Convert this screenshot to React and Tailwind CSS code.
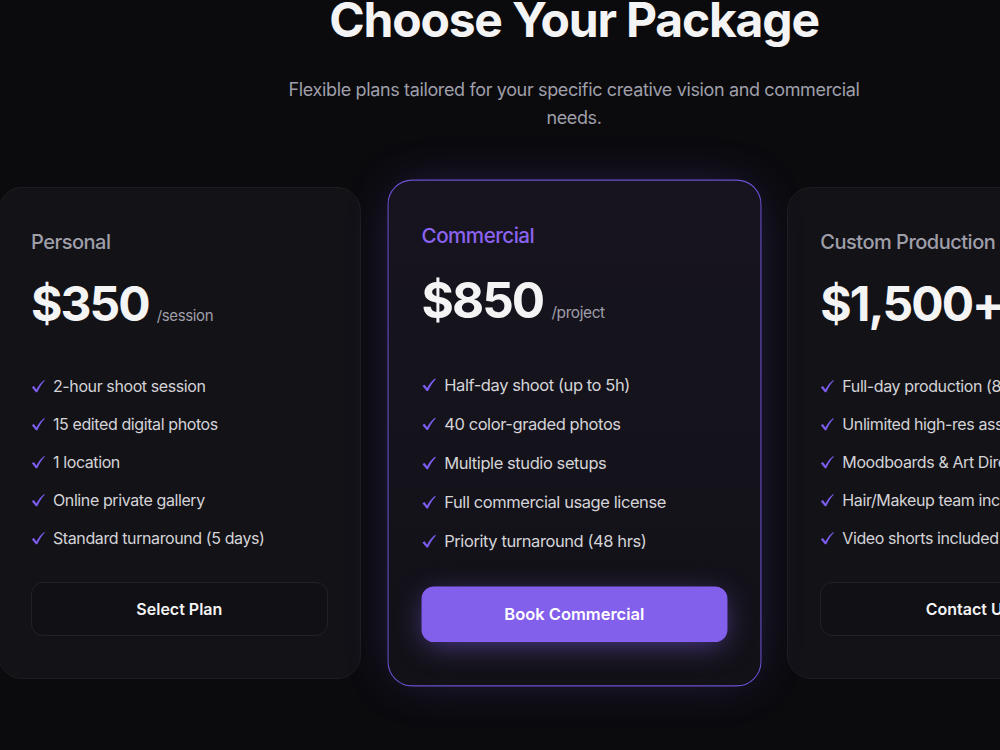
import React from "react";

const plans = [
  {
    name: "Personal",
    price: "$350",
    unit: "/session",
    features: [
      "2-hour shoot session",
      "15 edited digital photos",
      "1 location",
      "Online private gallery",
      "Standard turnaround (5 days)",
    ],
    cta: "Select Plan",
  },
  {
    name: "Commercial",
    price: "$850",
    unit: "/project",
    features: [
      "Half-day shoot (up to 5h)",
      "40 color-graded photos",
      "Multiple studio setups",
      "Full commercial usage license",
      "Priority turnaround (48 hrs)",
    ],
    cta: "Book Commercial",
    featured: true,
  },
  {
    name: "Custom Production",
    price: "$1,500+",
    unit: "/project",
    features: [
      "Full-day production (8+ hrs)",
      "Unlimited high-res assets",
      "Moodboards & Art Direction",
      "Hair/Makeup team included",
      "Video shorts included",
    ],
    cta: "Contact Us",
  },
];

const Check = () => (
  <svg viewBox="0 0 14 14" className="mr-2 h-[14px] w-[14px] shrink-0 fill-[#7d5cf0]">
    <path d="M0.8 8.2 L2.9 7.1 L5.4 10.4 C7.6 6.4 10.2 3.2 13.2 0.9 L13.8 1.7 C10.9 4.6 8.4 8.6 6.3 13.2 L4.9 13.2 Z" />
  </svg>
);

const PlanCard = ({ plan }) => {
  const featured = plan.featured;
  return (
    <div
      className={
        featured
          ? "relative z-10 scale-[1.03] rounded-3xl border border-[#6f52d6] bg-gradient-to-b from-[#17141f] to-[#121117] px-8 pt-10 pb-[42px] shadow-[0_0_50px_-14px_rgba(124,92,246,0.35)]"
          : "rounded-3xl border border-[#1d1c22] bg-[#131217] px-8 pt-10 pb-[42px]"
      }
    >
      <h3
        className={
          featured
            ? "text-xl font-medium leading-7 tracking-tight text-[#8b63f0]"
            : "text-xl font-medium leading-7 tracking-tight text-zinc-400"
        }
      >
        {plan.name}
      </h3>

      <div className="mt-6 flex items-baseline whitespace-nowrap">
        <span className="text-5xl font-bold leading-none tracking-[-0.04em] text-zinc-100">
          {plan.price}
        </span>
        <span className="ml-2 text-[15px] tracking-tight text-zinc-400">{plan.unit}</span>
      </div>

      <ul className="mt-[46px] flex flex-col gap-3.5">
        {plan.features.map((f) => (
          <li key={f} className="flex items-center whitespace-nowrap text-base leading-6 tracking-tight text-zinc-300">
            <Check />
            {f}
          </li>
        ))}
      </ul>

      {featured ? (
        <button className="mt-8 w-full rounded-xl border border-[#8660f2] bg-[#8360ec] py-3.5 text-base font-semibold leading-6 text-white shadow-[0_6px_28px_-4px_rgba(131,96,236,0.55)]">
          {plan.cta}
        </button>
      ) : (
        <button className="mt-8 w-full whitespace-nowrap rounded-xl border border-[#222128] bg-[#111014] py-3.5 text-base font-semibold leading-6 text-zinc-100">
          {plan.cta}
        </button>
      )}
    </div>
  );
};

export default function App() {
  return (
    <div className="h-[750px] w-full overflow-hidden bg-[#0b0b0e] font-['Inter',sans-serif]">
      <div className="flex w-[1148px] flex-col items-center">
        <h1 className="-mt-1 text-[48px] font-bold leading-none tracking-tight text-zinc-100">
          Choose Your Package
        </h1>
        <p className="mt-8 max-w-xl text-center text-lg leading-7 tracking-[-0.02em] text-zinc-400">
          Flexible plans tailored for your specific creative vision and commercial needs.
        </p>

        <div className="mt-[55px] grid w-[1152px] shrink-0 grid-cols-3 gap-8">
          {plans.map((plan) => (
            <PlanCard key={plan.name} plan={plan} />
          ))}
        </div>
      </div>
    </div>
  );
}
